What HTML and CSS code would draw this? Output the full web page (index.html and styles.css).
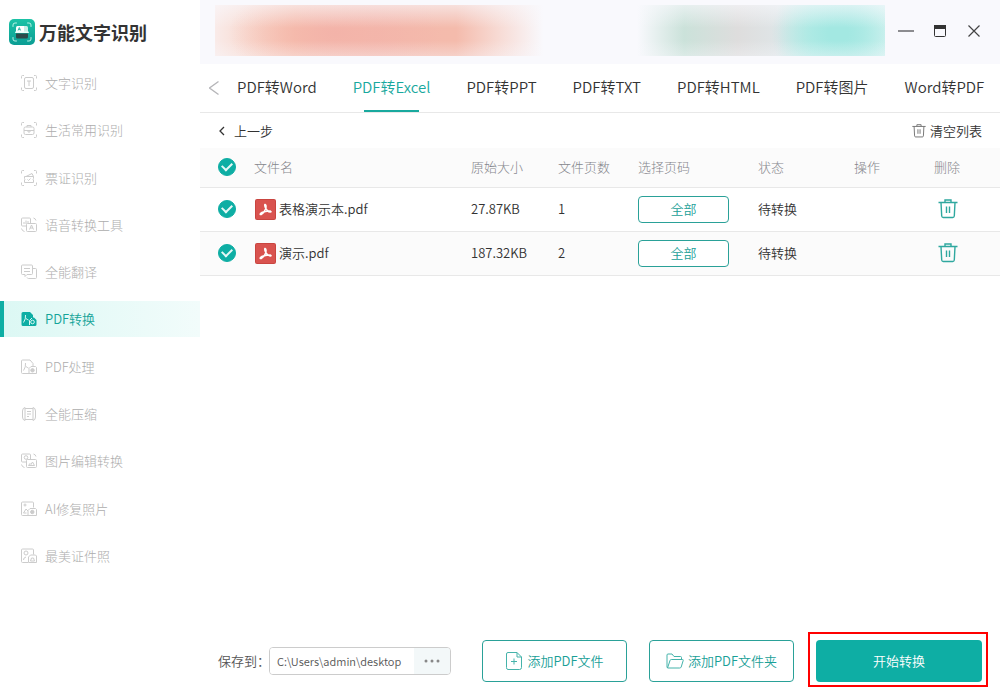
FILE: index.html
```html
<!DOCTYPE html>
<html lang="zh-CN">
<head>
<meta charset="utf-8">
<meta name="viewport" content="width=device-width, initial-scale=1">
<title>万能文字识别</title>
<link rel="stylesheet" href="styles.css">
</head>
<body>
<svg class="defs" aria-hidden="true">
  <symbol id="corners" viewBox="0 0 16 16"><path d="M.5 3.500V1.500q0-1 1-1h1.500M13 .5h1.500q1 0 1 1v2M15.500 12.500v2q0 1-1 1H13M3 15.500H1.500q-1 0-1-1v-2"/></symbol>
  <symbol id="pdf" viewBox="0 0 21 21"><rect width="21" height="21" rx="2" fill="#c94540"/><rect x="1" y="1" width="19" height="19" rx="1" fill="#d9534f"/><path d="M10 5.500q1.800 1 .6 4.500-1.500 4-4.400 5.500-1.500.3-.8-.9 2.500-2.300 10-2.500 1.500.7-.2 1-3-.6-4.600-4Q9.200 6 10 5.500z" fill="none" stroke="#fff" stroke-width="1.500" stroke-linejoin="round"/></symbol>
  <symbol id="trash" viewBox="0 0 20 20"><path d="M.5 3.500h19M7 3V1h6v2M3 3.500l.7 13.500q.2 1.500 1.500 1.500h9.600q1.300 0 1.500-1.500L17 3.500M8.500 7.500v6.500M11.500 7.500v6.500" fill="none" stroke="currentColor" stroke-width="1.400"/></symbol>
</svg>
<div class="app">
  <aside class="sidebar">
    <h1 class="brand">
      <svg class="brand-logo" viewBox="0 0 26 26" aria-hidden="true">
        <defs><linearGradient id="lg" x2="0" y2="1"><stop stop-color="#1cc3a6"/><stop offset="1" stop-color="#0b9d94"/></linearGradient></defs>
        <rect width="26" height="26" rx="5" fill="url(#lg)"/>
        <path d="M4 7.500V6q0-2 2-2h1.500M18.500 4H20q2 0 2 2v1.500M22 18.500V20q0 2-2 2h-1.500M7.500 22H6q-2 0-2-2v-1.500" fill="none" stroke="#c8f7ec" stroke-width=".9" stroke-linecap="round"/>
        <path d="M7 13V8.500Q7 7 8.500 7H15l4 3.500V13z" fill="#fff"/><path d="M15 7h2.500Q19 7 19 8.500V13h-4z" fill="#c9efe7"/>
        <path d="M9 11.500l1.300-3 1.300 3M9.500 10.600h1.600" fill="none" stroke="#10aa9a" stroke-width=".8"/>
        <rect x="6" y="12.500" width="14" height="1.600" rx=".8" fill="#e8fff9"/>
        <path d="M7 14.500h12V18q0 1.500-1.500 1.500h-9Q7 19.500 7 18z" fill="#2c4a4a"/>
      </svg>
      万能文字识别
    </h1>
    <nav class="menu">
      <a class="menu-item" href="#"><svg class="icon" viewBox="0 0 16 16"><use href="#corners"/><rect x="3.500" y="2.500" width="9" height="11" rx="1.500"/><path d="M6 6h4M8 6v5"/></svg>文字识别</a>
      <a class="menu-item" href="#"><svg class="icon" viewBox="0 0 16 16"><use href="#corners"/><rect x="3" y="5" width="10" height="7.500" rx="1.500"/><path d="M6 5V3.500h4V5M3 8.500h10M7 8.500v1.500h2V8.500"/></svg>生活常用识别</a>
      <a class="menu-item" href="#"><svg class="icon" viewBox="0 0 16 16"><use href="#corners"/><path d="M3.500 6.500h9v2q-1 .7 0 1.500v2.500h-9V10q1-.8 0-1.500zM5 6.500l6-3 1.500 3M6.500 9.500l1 1 2-2"/></svg>票证识别</a>
      <a class="menu-item" href="#"><svg class="icon" viewBox="0 0 16 16"><path d="M5.500 9H1.500q-1 0-1-1V2q0-1 1-1h7q1 0 1 1v4.500M3 7V5M5 7V3.500M7 6V4M6.500 6.500h8q1 0 1 1v6q0 1-1 1h-8q-1 0-1-1v-6q0-1 1-1zM8.500 12.500l2-4.500 2 4.500M9.200 11h2.600M12.500 1q2 .5 2.500 2.500M.5 11.500q.5 2.500 3 3"/></svg>语音转换工具</a>
      <a class="menu-item" href="#"><svg class="icon" viewBox="0 0 16 16"><path d="M1.500 1h9q1 0 1 1v7.500q0 1-1 1H6l-2 2v-2H1.500q-1 0-1-1V2q0-1 1-1zM3 4.500h6M3 7.500h6M11.500 4.500h3q1 0 1 1v8q0 1-1 1h-7q-1 0-1.500-1"/></svg>全能翻译</a>
      <a class="menu-item active" href="#" aria-current="page"><svg class="icon" viewBox="0 0 16 16"><path class="solid" d="M2 1h7l3 3v2.500h1l2.500 2.500v4.500q0 1.500-1.500 1.500H2Q.5 15 .5 13.500v-11Q.5 1 2 1z"/><path class="cut" d="M4.500 4q.5 4-2 7.500M5 7.500q1 1 2.500 1.500M8.500 14V9.500L11 7"/><circle class="cut" cx="11.500" cy="11" r="1.800"/></svg>PDF转换</a>
      <a class="menu-item" href="#"><svg class="icon" viewBox="0 0 16 16"><path d="M8 14.500H1.500q-1 0-1-1V2q0-1 1-1H9l3 3.500V7M4.500 4q.5 4-2 7.500M5 7.500q1 1 2.500 1.500M8 14.500V9.500l2-2h4.500l1 1v6z"/><circle class="fill" cx="11.500" cy="11.300" r="1.700"/></svg>PDF处理</a>
      <a class="menu-item" href="#"><svg class="icon" viewBox="0 0 16 16"><path d="M4 2.500h8M4 13.500h8M4 1.500v13M12 1.500v13M4 1.500Q1.500 2 1.500 5v6q0 3 2.500 3.500M12 1.500q2.500.5 2.500 3.500v6q0 3-2.500 3.500M6 5.500h4M6 8h4M6 10.500h2"/></svg>全能压缩</a>
      <a class="menu-item" href="#"><svg class="icon" viewBox="0 0 16 16"><path d="M5.500 9H1.500q-1 0-1-1V2q0-1 1-1h7q1 0 1 1v4.500M6.500 6.500h8q1 0 1 1v6q0 1-1 1h-8q-1 0-1-1v-6q0-1 1-1zM7.500 12.500l1.500-2 1 1 1.500-2.500 2 3.500zM12.500 1q2 .5 2.500 2.500M.5 11.500q.5 2.500 3 3"/><circle cx="5" cy="4.500" r="1.800"/></svg>图片编辑转换</a>
      <a class="menu-item" href="#"><svg class="icon" viewBox="0 0 16 16"><path d="M7 14.500H1.500q-1 0-1-1V2q0-1 1-1h10q1 0 1 1v4.500M7 14.500v-5l2-2h5.500l1 1v6zM2.500 12h3M2.500 12l2.500-4 2 2"/><circle cx="4" cy="4" r="1"/><circle class="fill" cx="11.300" cy="11" r="1.700"/></svg>AI修复照片</a>
      <a class="menu-item" href="#"><svg class="icon" viewBox="0 0 16 16"><path d="M7 14.500H1.500q-1 0-1-1V2q0-1 1-1h10q1 0 1 1v4.500M7.500 14.500V9l2-2h5l1 1v6.500zM2.500 12q0-2.500 2.500-3M9.500 13l1-3h2l1 3z"/><circle cx="5" cy="5" r="2"/></svg>最美证件照</a>
    </nav>
  </aside>

  <main class="main">
    <header class="titlebar">
      <div class="banner"></div>
      <div class="window-controls">
        <button class="plain" aria-label="最小化"><svg viewBox="0 0 16 16"><path d="M0 8h16" stroke="#8c8c90" stroke-width="2"/></svg></button>
        <button class="plain" aria-label="最大化"><svg viewBox="0 0 16 16"><rect x="2.500" y="2.500" width="11" height="11" rx="1" fill="none" stroke="#333"/><path d="M2 2h12v4H2z" fill="#333"/></svg></button>
        <button class="plain" aria-label="关闭"><svg viewBox="0 0 16 16"><path d="M2.500 2.500l11 11M13.500 2.500l-11 11" stroke="#444" stroke-width="1.200"/></svg></button>
      </div>
    </header>

    <nav class="tabs">
      <button class="plain tabs-prev" aria-label="向左"><svg viewBox="0 0 10 16"><path d="M9.500 1.500l-9 6.500 9 6.500" fill="none" stroke="#b5b5b8" stroke-width="1.300"/></svg></button>
      <a class="tab" href="#">PDF转Word</a>
      <a class="tab active" href="#" aria-current="page">PDF转Excel</a>
      <a class="tab" href="#">PDF转PPT</a>
      <a class="tab" href="#">PDF转TXT</a>
      <a class="tab" href="#">PDF转HTML</a>
      <a class="tab" href="#">PDF转图片</a>
      <a class="tab" href="#">Word转PDF</a>
    </nav>

    <div class="toolbar">
      <button class="plain tool"><svg class="back-icon" viewBox="0 0 8 10"><path d="M6 1L2 5l4 4" fill="none" stroke="#333" stroke-width="1.300"/></svg>上一步</button>
      <button class="plain tool"><svg class="clear-icon" viewBox="0 0 20 20"><use href="#trash"/></svg>清空列表</button>
    </div>

    <table class="files">
      <colgroup><col class="c-check"><col><col class="c-size"><col class="c-pages"><col class="c-range"><col class="c-state"><col class="c-action"><col class="c-delete"></colgroup>
      <thead>
        <tr><th class="check-cell"><input class="check" type="checkbox" checked aria-label="全选"></th><th>文件名</th><th>原始大小</th><th>文件页数</th><th>选择页码</th><th>状态</th><th>操作</th><th>删除</th></tr>
      </thead>
      <tbody>
        <tr><td class="check-cell"><input class="check" type="checkbox" checked aria-label="表格演示本.pdf"></td><td><span class="file"><svg class="file-icon" viewBox="0 0 21 21"><use href="#pdf"/></svg>表格演示本.pdf</span></td><td>27.87KB</td><td>1</td><td><button class="range">全部</button></td><td>待转换</td><td></td><td><button class="plain delete" aria-label="删除"><svg viewBox="0 0 20 20"><use href="#trash"/></svg></button></td></tr>
        <tr><td class="check-cell"><input class="check" type="checkbox" checked aria-label="演示.pdf"></td><td><span class="file"><svg class="file-icon" viewBox="0 0 21 21"><use href="#pdf"/></svg>演示.pdf</span></td><td>187.32KB</td><td>2</td><td><button class="range">全部</button></td><td>待转换</td><td></td><td><button class="plain delete" aria-label="删除"><svg viewBox="0 0 20 20"><use href="#trash"/></svg></button></td></tr>
      </tbody>
    </table>

    <footer class="footer">
      <label class="save-label" for="path">保存到：</label>
      <div class="path">
        <input class="path-input" id="path" type="text" value="C:\Users\admin\desktop">
        <button class="path-more" aria-label="浏览"><svg viewBox="0 0 16 4"><circle cx="2" cy="2" r="1.500"/><circle cx="8" cy="2" r="1.500"/><circle cx="14" cy="2" r="1.500"/></svg></button>
      </div>
      <div class="actions">
        <button class="btn"><svg class="btn-icon" viewBox="0 0 18 18"><path d="M3 .5h9l4.500 4.500v10.500q0 2-2 2H3q-1.500 0-1.500-2V2Q1.500.5 3 .5zM12 .5V5h4.500M9 6.500v6M6 9.500h6"/></svg>添加PDF文件</button>
        <button class="btn"><svg class="btn-icon" viewBox="0 0 18 18"><path d="M1 15V3q0-1 1-1h4l2 2.500h6.500q1 0 1 1V7.500M1.500 16L4 8.500q.3-1 1.300-1h11.200q1 0 .7 1l-2 6.500q-.4 1-1.500 1H2q-1 0-1-1"/></svg>添加PDF文件夹</button>
        <div class="highlight"><button class="btn primary">开始转换</button></div>
      </div>
    </footer>
  </main>
</div>
</body>
</html>
```
FILE: styles.css
```css
* {
  box-sizing: border-box;
}

body {
  margin: 0;
  background: #fff;
  color: #333;
  font: 350 13px/20px "Noto Sans CJK SC", sans-serif;
}

button,
input {
  margin: 0;
  font: inherit;
}

a {
  color: inherit;
  text-decoration: none;
}

svg {
  display: block;
}

.defs {
  position: absolute;
  width: 0;
  height: 0;
}

.plain {
  padding: 0;
  border: 0;
  background: none;
  color: inherit;
}

.app {
  display: grid;
  grid-template-columns: 200px minmax(0, 1fr);
  min-height: 100vh;
}

/* Sidebar */
.brand {
  display: flex;
  align-items: center;
  gap: 4px;
  height: 65px;
  margin: 0;
  padding: 0 0 2px 9px;
  font-size: 18px;
  font-weight: 700;
}

.brand-logo {
  width: 26px;
  height: 26px;
}

.menu {
  display: flex;
  flex-direction: column;
  justify-content: space-between;
  gap: 11px;
  min-height: 509px;
}

.menu-item {
  display: flex;
  align-items: center;
  gap: 8px;
  height: 36px;
  padding-left: 17px;
  border-left: 4px solid transparent;
  color: #adadad;
  font-weight: 300;
}

.menu-item.active {
  border-color: #0eaea4;
  background: linear-gradient(90deg, #dcf8f4, #f2fcfb);
  color: #14a499;
  font-weight: 350;
}

.icon {
  width: 16px;
  height: 16px;
  fill: none;
  stroke: #ccc;
}

.icon .fill {
  fill: #ccc;
}

.icon .solid {
  fill: #0eaea4;
  stroke: none;
}

.icon .cut {
  stroke: #dcf8f4;
}

/* Main column */
.main {
  display: flex;
  flex-direction: column;
}

.titlebar {
  display: flex;
  align-items: center;
  gap: 13px;
  padding: 5px 18px 8px 15px;
  background: #f9f9fd;
}

.banner {
  flex: 1;
  height: 51px;
  background:
    linear-gradient(rgba(249, 249, 253, 0.6), transparent 45%, transparent 70%, rgba(249, 249, 253, 0.35)),
    radial-gradient(ellipse 16% 110% at 18% 55%, #f3b3a9, transparent),
    radial-gradient(ellipse 10% 120% at 93% 55%, #a3e8e2 15%, transparent),
    linear-gradient(90deg, #f9ebe9, #f8c4b0 12%, #f4b9ac 24%, #f4bbac 36%, #f7d9d2 42%, #f9f9fd 49%, #f9f9fd 63%, #cbe2da 70%, #dedddd 78%, #dfe5e7 84%, #c4ede9 89%, #bcece8 95%, #dcf4f3);
}

.window-controls {
  display: flex;
  gap: 18px;
}

.window-controls svg {
  width: 16px;
  height: 16px;
}

.tabs {
  display: flex;
  gap: 36px;
  padding-left: 9px;
  border-bottom: 1px solid #e8e8e8;
  font-size: 15px;
  white-space: nowrap;
  overflow: hidden;
}

.tabs-prev {
  margin-right: -18px;
}

.tabs-prev svg {
  width: 10px;
  height: 16px;
}

.tab {
  display: flex;
  flex-direction: column;
  align-items: center;
  height: 48px;
  line-height: 46px;
}

.tab.active {
  color: #19a99e;
}

.tab.active::after {
  content: "";
  flex: none;
  width: 55px;
  height: 2px;
  background: #19a99e;
}

.toolbar {
  display: flex;
  justify-content: space-between;
  height: 35px;
  padding: 0 18px;
}

.tool {
  display: flex;
  align-items: center;
  gap: 4px;
}

.back-icon {
  width: 8px;
  height: 10px;
  margin-right: 4px;
}

.clear-icon {
  width: 14px;
  height: 14px;
  color: #777;
}

/* File table */
.files {
  width: 100%;
  table-layout: fixed;
  border-collapse: collapse;
}

.c-check { width: 54px; }
.c-size { width: 87px; }
.c-pages { width: 80px; }
.c-range { width: 120px; }
.c-state { width: 96px; }
.c-action { width: 80px; }
.c-delete { width: 66px; }

.files th,
.files td {
  height: 44px;
  padding: 0;
  border-bottom: 1px solid #e8e8e8;
  text-align: left;
  font-weight: inherit;
}

.files th {
  height: 39px;
  color: #85868c;
  font-weight: 300;
}

.files thead tr,
.files tbody tr:nth-child(even) {
  background: #fbfbfb;
}

.files .check-cell {
  padding-left: 18px;
}

.check {
  display: grid;
  place-items: center;
  width: 18px;
  height: 18px;
  border: 1px solid #0eaea4;
  border-radius: 50%;
  appearance: none;
}

.check:checked {
  background: #0eaea4;
}

.check:checked::after {
  content: "";
  width: 8px;
  height: 5px;
  margin-bottom: 3px;
  border: solid #e6f8f6;
  border-width: 0 0 2px 2px;
  rotate: -45deg;
}

.file {
  display: flex;
  align-items: center;
  gap: 3px;
}

.file-icon {
  width: 21px;
  height: 21px;
  margin-left: 1px;
}

.range {
  display: block;
  width: 91px;
  height: 27px;
  padding: 0;
  border: 1px solid #2aa198;
  border-radius: 4px;
  background: #fff;
  color: #19a097;
}

.delete {
  display: block;
  margin-left: 4px;
  color: #2fa89f;
}

.delete svg {
  width: 20px;
  height: 20px;
}

/* Footer */
.footer {
  display: flex;
  align-items: center;
  margin-top: auto;
  padding: 0 12px 18px 18px;
}

.save-label {
  width: 51px;
  color: #555;
  white-space: nowrap;
}

.path {
  display: flex;
  width: 182px;
  height: 28px;
  border: 1px solid #ccc;
  border-radius: 4px;
  overflow: hidden;
}

.path-input {
  flex: 1;
  min-width: 0;
  padding: 0 0 0 7px;
  border: 0;
  color: #555;
  font-size: 11px;
}

.path-more {
  display: grid;
  place-items: center;
  width: 36px;
  padding: 0;
  border: 0;
  background: #f3f8f9;
}

.path-more svg {
  width: 16px;
  height: 4px;
  fill: #888;
}

.actions {
  display: flex;
  align-items: center;
  gap: 22px;
  margin-left: auto;
}

.btn {
  display: flex;
  align-items: center;
  justify-content: center;
  gap: 4px;
  width: 145px;
  height: 42px;
  padding: 0;
  border: 1px solid #2aa198;
  border-radius: 4px;
  background: #fff;
  color: #19a097;
}

.btn-icon {
  width: 18px;
  height: 18px;
  fill: none;
  stroke: #45b3aa;
}

/* Frame drawn around the start button without changing the row height */
.highlight {
  margin: -8px 0 -5px -8px;
  padding: 6px 4px 3px 6px;
  border: 2px solid #f00;
}

.primary {
  width: 166px;
  border: 0;
  background: #0eaea4;
  color: #fff;
}
```
